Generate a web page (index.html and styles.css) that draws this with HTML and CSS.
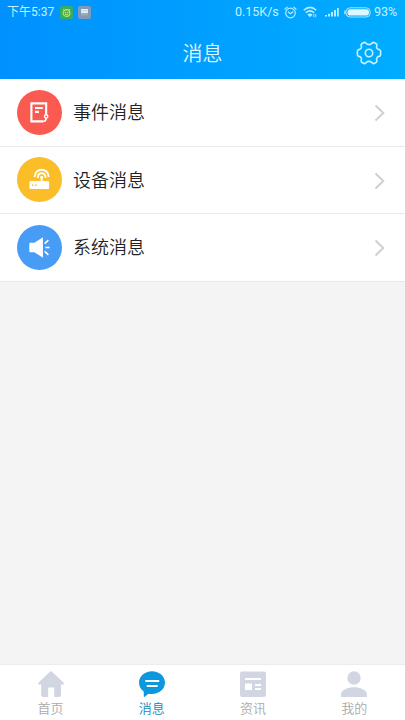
FILE: index.html
```html
<!DOCTYPE html>
<html lang="zh-CN">
<head>
<meta charset="utf-8">
<title>消息</title>
<link rel="stylesheet" href="styles.css">
</head>
<body>
<div class="app">
  <header class="header">
    <div class="status">
      <span class="time">下午5:37</span>
      <svg class="notice" width="13" height="13" viewBox="0 0 13 13"><rect width="13" height="13" rx="2" fill="#35ad62"/><circle cx="6.5" cy="7" r="3.4" fill="#66ad48" stroke="#b9e878" stroke-width="1.1"/><path d="M3.2 3.2l1.4 1.3M9.8 3.2L8.4 4.5M4.7 6.4h1.2M7.2 6.4h1.2M5 8.3h3" stroke="#b9e878" stroke-width="1"/></svg>
      <svg class="notice" width="13" height="13" viewBox="0 0 13 13"><rect width="13" height="13" rx="2" fill="#7f9bb9"/><path d="M3 3h7v4.2H3z" fill="#e4eef4"/><path d="M3 4.8h7" stroke="#b8c6d2" stroke-width=".7"/><path d="M3 8.8h7" stroke="#a5b4c4"/></svg>
      <span class="speed">0.15K/s</span>
      <svg class="alarm" width="13" height="13" viewBox="0 0 13 13" fill="none" stroke="#b4ecff" stroke-width="1.2" stroke-linecap="round"><circle cx="6.5" cy="7" r="4.8"/><path d="M.9 3.2L3.2 1.1M12.1 3.2L9.8 1.1M4.4 6l2.1 1.7L9 5.8"/></svg>
      <svg class="wifi" width="15" height="12" viewBox="0 0 15 12" fill="none" stroke="#b4ecff" stroke-width="1.5"><path d="M.7 4.2Q7 -1.400 13.300 4.200M2.700 6.700Q7 3 11.300 6.700"/><path d="M4.300 8.500Q7 6.500 9.700 8.500L7 11.300z" fill="#b4ecff" stroke="none"/><path d="M10.900 11.300V8M12.800 8v3.300" stroke-width=".9"/></svg>
      <svg class="signal" width="14" height="10" viewBox="0 0 14 10" fill="#b4ecff"><path d="M0 8h2v1.500H0zM3 6.800h2v2.700H3zM6 5h2v4.500H6zM9 3h2v6.500H9zM12 1h1.800v8.500H12z"/></svg>
      <svg class="battery" width="27" height="11" viewBox="0 0 27 11"><rect x="2" y=".8" width="24.200" height="9.200" rx="4" fill="none" stroke="#a6e6ff"/><rect x="3.500" y="2.200" width="21.500" height="6.400" rx="2.800" fill="#dcf7ff"/><path d="M1 3.500v3.700" stroke="#b4ecff" stroke-width="1.400"/></svg>
      <span class="percent">93%</span>
    </div>
    <div class="titlebar">
      <span></span>
      <h1 class="title">消息</h1>
      <svg class="gear" width="26" height="24" viewBox="0 0 26 24" fill="none" stroke="#c4f4ff" stroke-width="1.600" stroke-linejoin="round"><path d="M8 1.500Q9.200 1 10 2.300Q13 4.800 16 2.300Q16.800 1 18 1.500L20.300 2.800Q21.300 3.600 20.700 5Q20 8 23.200 8.600Q24.600 9 24.600 10.200V13.800Q24.600 15 23.200 15.400Q20 16 20.700 19Q21.300 20.400 20.300 21.200L18 22.500Q16.800 23 16 21.700Q13 19.200 10 21.700Q9.200 23 8 22.500L5.700 21.200Q4.700 20.400 5.300 19Q6 16 2.800 15.400Q1.400 15 1.400 13.800V10.200Q1.400 9 2.800 8.600Q6 8 5.300 5Q4.700 3.600 5.700 2.800z"/><circle cx="13" cy="12" r="3.700"/></svg>
    </div>
  </header>

  <main class="list">
    <div class="row">
      <svg class="badge red" viewBox="0 0 46 46"><g fill="none" stroke="#fff" stroke-width="2.200"><path d="M29.800 24V13.600H14.700v18.400H27"/><path d="M18.400 18.400h8M18.400 22.300h4"/><path d="M29.800 22v3.400M27 32q2.800 0 2.800-4" stroke-width="1.600"/><circle cx="29.800" cy="27" r="1.700" stroke-width="1.500"/></g></svg>
      <span class="label">事件消息</span>
      <svg class="chevron" viewBox="0 0 11 18"><path d="M1.500 1.500L9.300 9l-7.800 7.500"/></svg>
    </div>
    <div class="row">
      <svg class="badge yellow" viewBox="0 0 46 46"><rect x="12.800" y="24.500" width="20" height="8.300" rx="1.200" fill="#fff"/><circle cx="16" cy="28.700" r=".9" fill="#fbbd28"/><circle cx="19.200" cy="28.700" r=".9" fill="#fbbd28"/><g fill="none" stroke="#fff" stroke-width="1.900"><path d="M18 20.500C18 10.500 32.400 10.500 32.400 20.500M21.200 21.500C21.200 15 29.200 15 29.200 21.500"/><path d="M25.200 20.500v4.500"/></g><circle cx="25.200" cy="20.700" r="1.600" fill="#fff"/></svg>
      <span class="label">设备消息</span>
      <svg class="chevron" viewBox="0 0 11 18"><path d="M1.500 1.500L9.300 9l-7.800 7.500"/></svg>
    </div>
    <div class="row">
      <svg class="badge blue" viewBox="0 0 46 46"><path d="M13.600 18.200h4.200L26.500 12.500v21l-8.700-5.700h-4.200q-1 0-1-1v-7.600q0-1 1-1z" fill="#fff"/><path d="M28.300 19l3.800-3.500M29 23h4.300M28.300 27l3.800 3.500" stroke="#fff" stroke-width="1.500"/></svg>
      <span class="label">系统消息</span>
      <svg class="chevron" viewBox="0 0 11 18"><path d="M1.500 1.500L9.300 9l-7.800 7.500"/></svg>
    </div>
  </main>

  <nav class="tabs">
    <div class="tab">
      <svg viewBox="0 0 28 28"><path d="M13 1.700q1-.9 2 0l11.700 11q1.100 1.600-.6 1.800H24V25q0 2-2 2h-4.800v-9.500h-6V27H6.200q-2 0-2-2V14.500H2.100q-1.800-.2-.7-1.800z"/></svg>
      <span>首页</span>
    </div>
    <div class="tab active">
      <svg viewBox="0 0 28 28"><path d="M14 1.200c7.300 0 13 5 13 11.300S21.500 24 14 24q-2 0-3.500-.3L6.500 26.900q-.7.3-.7-.6v-4.600C2.800 19.500 1 16.300 1 12.500 1 6.200 6.700 1.200 14 1.200z"/><path d="M8 11h12.500M9.500 16h9.500" stroke="#fff" stroke-width="1.800" stroke-linecap="round"/></svg>
      <span>消息</span>
    </div>
    <div class="tab">
      <svg viewBox="0 0 28 28"><rect x="1" y="1.500" width="26" height="25.500" rx="2"/><path d="M6 9h16M16 15h6M16 19h6" stroke="#fff" stroke-width="2"/><path d="M6 13.500h7V20H6z" fill="#fff"/></svg>
      <span>资讯</span>
    </div>
    <div class="tab">
      <svg viewBox="0 0 28 28"><circle cx="14" cy="8" r="6.700"/><path d="M1 27v-2.500C1 20 8 17.300 14 17.300S27 20 27 24.500V27z"/></svg>
      <span>我的</span>
    </div>
  </nav>
</div>
</body>
</html>
```
FILE: styles.css
```css
* { box-sizing: border-box; }
body {
  margin: 0;
  font-family: "Noto Sans CJK SC", sans-serif;
  font-weight: 400;
}
svg { display: block; flex: none; }
.app {
  display: flex;
  flex-direction: column;
  width: 405px;
  height: 720px;
  background: #f4f4f4;
}
.header {
  height: 79px;
  background: linear-gradient(90deg, #0091ff, #00adff);
  color: #c4f2ff;
}
.status {
  display: flex;
  align-items: center;
  height: 24px;
  padding: 0 7px;
  font: 12.5px/24px Roboto, "Noto Sans CJK SC", sans-serif;
  white-space: nowrap;
}
.time { width: 53px; font-size: 12px; }
.notice { margin-right: 5px; }
.speed { margin-left: auto; width: 49px; }
.wifi { margin-left: 6px; }
.signal { margin-left: 7px; }
.battery { margin-left: 5px; }
.percent { width: 24px; margin-left: 3px; font-size: 12.5px; }
.titlebar {
  display: grid;
  grid-template-columns: 1fr auto 1fr;
  align-items: center;
  height: 55px;
  padding: 2px 23px 0;
}
.title {
  margin: 0;
  font-size: 20px;
  font-weight: 350;
  line-height: 30px;
  color: #e0f9ff;
}
.gear { justify-self: end; }
.row {
  display: flex;
  align-items: center;
  height: 67.5px;
  padding: 0 20px 0 17px;
  background: #fff;
  border-bottom: 1px solid #e9e9e9;
}
.badge { width: 45px; height: 45px; border-radius: 50%; }
.red { background: #fa5a50; }
.yellow { background: #fbbd28; }
.blue { background: #479df5; }
.label {
  flex: 1;
  margin: -2px 0 0 11px;
  font-size: 18px;
  font-weight: 350;
  line-height: 26px;
  color: #222;
}
.chevron { width: 11px; height: 18px; margin-top: 2px; }
.chevron path { fill: none; stroke: #d0d0d0; stroke-width: 2; }
.tabs {
  display: grid;
  grid-template-columns: repeat(4, 1fr);
  height: 56px;
  margin-top: auto;
  background: #fff;
  border-top: 1px solid #ececec;
}
.tab {
  display: flex;
  flex-direction: column;
  align-items: center;
  padding-top: 5px;
  font-size: 13px;
  font-weight: 350;
  line-height: 20px;
  color: #aaa;
}
.tab svg { width: 28px; height: 28px; fill: #d1d6e2; }
.tab.active { color: #168ab8; }
.active svg { fill: #0d98dd; }
```
